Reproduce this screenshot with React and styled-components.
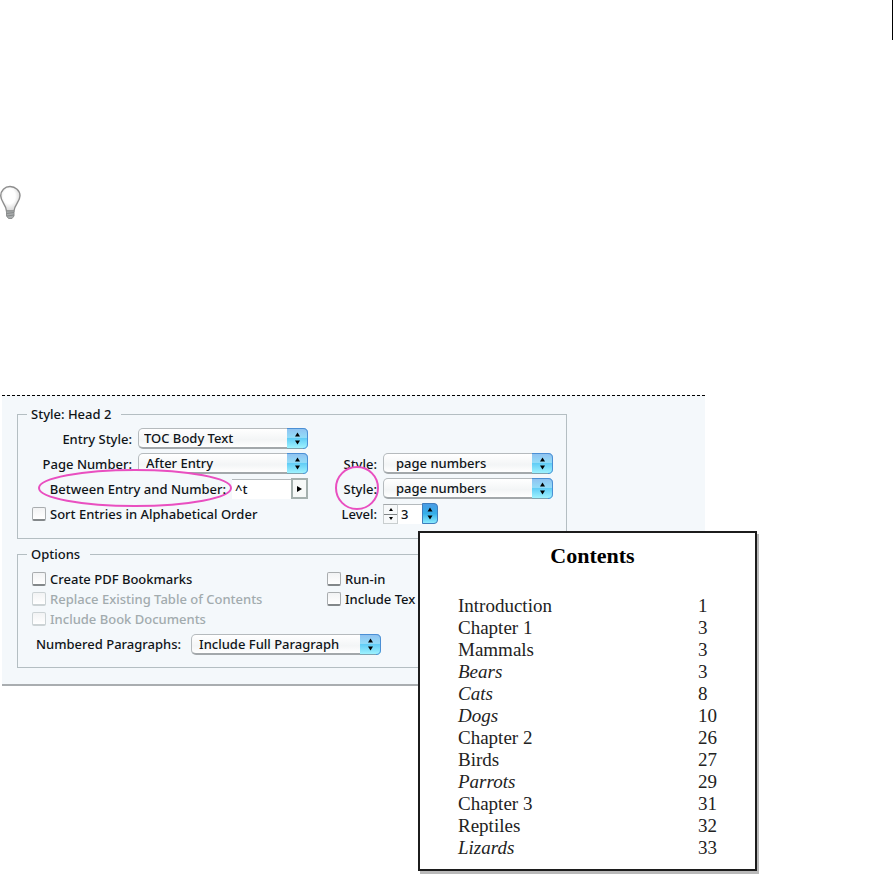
import React from "react";
import styled, { createGlobalStyle } from "styled-components";

const GlobalStyle = createGlobalStyle`
  * {
    box-sizing: border-box;
  }
  body {
    margin: 0;
    background: #ffffff;
    color: #101418;
    font-family: "Noto Sans", "Open Sans", sans-serif;
    font-size: 13px;
    font-weight: 500;
  }
  input,
  select,
  button {
    margin: 0;
    font: inherit;
    color: inherit;
  }
`;

const Page = styled.div`
  display: flex;
  flex-direction: column;
`;

const PageHeader = styled.header`
  height: 40px;
  border-right: 1px solid #000000;
`;

const Tip = styled.div`
  height: 210px;
  margin-top: 145px;
`;

const Figure = styled.figure`
  display: grid;
  margin: 0;
  padding-left: 2px;
`;

const Panel = styled.form`
  grid-area: 1 / 1;
  align-self: start;
  width: 100%;
  max-width: 703px;
  padding: 8px 15px 16px;
  border-top: 1px dashed #000000;
  border-bottom: 2px solid #a9adb0;
  background: #f4f8fb;
`;

const Group = styled.fieldset`
  max-width: 550px;
  margin: 0 0 5px;
  padding: ${(props) => props.$padding};
  border: 1px solid #b4bec2;
  &:last-child {
    margin-bottom: 0;
  }
`;

const GroupTitle = styled.legend`
  margin-left: 9px;
  padding: 0 10px 0 4px;
  line-height: 20px;
`;

const StyleGrid = styled.div`
  display: grid;
  grid-template-columns: 290px 1fr;
  grid-auto-rows: 25px;
`;

const Field = styled.div`
  display: flex;
  grid-column: 1;
  align-items: center;
  justify-content: flex-end;
  gap: 6px;
`;

const SideField = styled(Field)`
  grid-column: 2;
  justify-content: flex-start;
`;

const Label = styled.label`
  line-height: 20px;
  white-space: nowrap;
`;

const SideLabel = styled(Label)`
  width: 69px;
  text-align: right;
`;

const Ringed = styled.span`
  position: relative;
  z-index: 1;
`;

const Ring = styled.svg`
  position: absolute;
  z-index: -1;
  top: 50%;
  left: 50%;
  transform: translate(-50%, -50%);
`;

const SelectBox = styled.div`
  position: relative;
  width: ${(props) => props.$width};
  height: 21px;
`;

const SelectInput = styled.select`
  appearance: none;
  display: block;
  width: 100%;
  height: 21px;
  padding: 0 0 0 ${(props) => props.$indent};
  border: 1px solid #b5babd;
  border-bottom: 2px solid #a3a8ab;
  border-radius: 5px;
  background: linear-gradient(#ffffff 0%, #f3f5f6 60%, #ffffff 100%);
  line-height: 18px;
`;

const Cap = styled.svg`
  position: absolute;
  top: 0;
  right: 0;
  pointer-events: none;
`;

const TextInput = styled.input`
  width: ${(props) => props.$width};
  height: 20px;
  padding: 0 3px;
  border: 0;
  border-top: 1px solid #b5babd;
  background: #ffffff;
`;

const Joined = styled.div`
  display: flex;
  align-items: center;
`;

const MenuButton = styled.button`
  display: flex;
  align-items: center;
  justify-content: center;
  width: 17px;
  height: 21px;
  padding: 0;
  border: 2px solid #a5b0ae;
  background: #f7f9f8;
`;

const Stepper = styled.div`
  display: flex;
  flex-direction: column;
  border: 1px solid #c9cecf;
  border-top-color: #a3a8ab;
`;

const StepButton = styled.button`
  display: flex;
  align-items: center;
  justify-content: center;
  width: 13px;
  height: 9px;
  padding: 0;
  border: 0;
  background: #f7f9fa;
  & + & {
    border-top: 1px solid #7f8486;
  }
`;

const CheckLabel = styled.label`
  display: flex;
  align-items: center;
  gap: 4px;
  padding-left: 14px;
  line-height: 20px;
  white-space: nowrap;
  color: ${(props) => (props.$muted ? "#a2abae" : "inherit")};
`;

const CheckInput = styled.input`
  appearance: none;
  width: 14px;
  height: 14px;
  border: 1px solid #a9adaf;
  border-bottom: 2px solid #83888a;
  border-radius: 2px;
  background: linear-gradient(#f2f3f4, #ffffff);
  &:checked {
    background: #43aee4;
  }
  &:disabled {
    border-color: #ccd3d5;
  }
`;

const OptionGrid = styled.div`
  display: grid;
  grid-template-columns: 295px 1fr;
  grid-template-rows: repeat(3, 20px);
  grid-auto-flow: column;
`;

const NumberedField = styled(Field)`
  height: 30px;
  justify-content: flex-start;
  gap: 10px;
  padding-left: 18px;
`;

const Card = styled.section`
  grid-area: 1 / 1;
  z-index: 2;
  justify-self: start;
  width: 339px;
  margin: 136px 0 3px 416px;
  padding: 8px 38px 10px;
  border: 2px solid #1c1c1c;
  background: #ffffff;
  box-shadow: 2px 3px 0 #b9b9b9;
  color: #222222;
  font-family: "Liberation Serif", serif;
  font-weight: 400;
`;

const CardTitle = styled.h2`
  margin: 0 0 24px;
  padding-left: 10px;
  color: #000000;
  font-size: 22px;
  line-height: 30px;
  text-align: center;
`;

const ContentsTable = styled.table`
  width: 100%;
  border-collapse: collapse;
  font-size: 19px;
  line-height: 22px;
`;

const EntryCell = styled.td`
  height: 22px;
  padding: 0;
  font-style: ${(props) => (props.$italic ? "italic" : "normal")};
`;

const PageCell = styled.td`
  width: 18px;
  padding: 0;
`;

const entries = [
  { title: "Introduction", page: 1 },
  { title: "Chapter 1", page: 3 },
  { title: "Mammals", page: 3 },
  { title: "Bears", page: 3, italic: true },
  { title: "Cats", page: 8, italic: true },
  { title: "Dogs", page: 10, italic: true },
  { title: "Chapter 2", page: 26 },
  { title: "Birds", page: 27 },
  { title: "Parrots", page: 29, italic: true },
  { title: "Chapter 3", page: 31 },
  { title: "Reptiles", page: 32 },
  { title: "Lizards", page: 33, italic: true },
];

const BulbIcon = () => (
  <svg width="22" height="35" viewBox="0 0 22 35" aria-hidden="true">
    <defs>
      <radialGradient id="glass" cx="0.45" cy="0.4" r="0.6">
        <stop offset="0.5" stopColor="#ffffff" />
        <stop offset="1" stopColor="#d4d4d4" />
      </radialGradient>
    </defs>
    <path
      d="M10 1.5C4.8 1.5 0.7 5.6 0.7 10.8C0.7 16.5 6 19.5 6.5 26H14C14.5 19.5 20 16.5 20 10.8C20 5.6 15.5 1.5 10 1.5Z"
      fill="url(#glass)"
      stroke="#8d8d8d"
      strokeWidth="1.4"
    />
    <path
      d="M6.5 26H14V31L12 33.5H8.5L6.5 31Z"
      fill="#a9acad"
      stroke="#8f9292"
    />
    <path d="M6.5 28.5L14 27.5M7 31L14 30" stroke="#858888" />
  </svg>
);

const Select = ({ id, value, width, indent = "5px" }) => (
  <SelectBox $width={width}>
    <SelectInput id={id} $indent={indent}>
      <option>{value}</option>
    </SelectInput>
    <Cap width="21" height="21" viewBox="0 0 21 21" aria-hidden="true">
      <defs>
        <linearGradient id={`${id}-cap`} x1="0" y1="0" x2="0" y2="1">
          <stop offset="0" stopColor="#8fc0f0" />
          <stop offset="0.45" stopColor="#93dcf8" />
          <stop offset="0.5" stopColor="#62cdf6" />
          <stop offset="1" stopColor="#a4f6ff" />
        </linearGradient>
      </defs>
      <path d="M0 0H16Q21 0 21 5V16Q21 21 16 21H0Z" fill={`url(#${id}-cap)`} />
      <path
        d="M0 0.5H16Q20.5 0.5 20.5 5V16Q20.5 20.5 16 20.5"
        fill="none"
        stroke="#4b8fd4"
      />
      <path d="M0 20.5H16" stroke="#7fa3b0" />
      <path d="M8 8.5L10.5 4.5L13 8.5ZM8 12.5L10.5 16.5L13 12.5Z" />
    </Cap>
  </SelectBox>
);

const LevelSelect = () => (
  <SelectBox $width="16px">
    <SelectInput id="level-menu" $indent="0" aria-label="Level list" />
    <Cap width="16" height="21" viewBox="0 0 16 21" aria-hidden="true">
      <defs>
        <linearGradient id="level-cap" x1="0" y1="0" x2="0" y2="1">
          <stop offset="0" stopColor="#4b9be4" />
          <stop offset="0.5" stopColor="#35aee9" />
          <stop offset="1" stopColor="#8eeeff" />
        </linearGradient>
      </defs>
      <path
        d="M0.5 0.5H12Q15.500 0.5 15.5 4V17Q15.5 20.5 12 20.5H0.5Z"
        fill="url(#level-cap)"
        stroke="#3f7dbd"
      />
      <path d="M5.5 8.5L8 4.5L10.5 8.5ZM5.5 12.5L8 16.5L10.5 12.5Z" />
    </Cap>
  </SelectBox>
);

const Check = ({ label, disabled }) => (
  <CheckLabel $muted={disabled}>
    <CheckInput type="checkbox" disabled={disabled} />
    {label}
  </CheckLabel>
);

const StyleGroup = () => (
  <Group $padding="2px 0 12px">
    <GroupTitle>Style: Head 2</GroupTitle>
    <StyleGrid>
      <Field>
        <Label htmlFor="entry-style">Entry Style:</Label>
        <Select id="entry-style" value="TOC Body Text" width="170px" />
      </Field>
      <Field>
        <Label htmlFor="page-number">Page Number:</Label>
        <Select
          id="page-number"
          value="After Entry"
          width="170px"
          indent="7px"
        />
      </Field>
      <SideField>
        <SideLabel htmlFor="number-style">Style:</SideLabel>
        <Select
          id="number-style"
          value="page numbers"
          width="170px"
          indent="12px"
        />
      </SideField>
      <Field>
        <Label htmlFor="between">
          <Ringed>
            <Ring width="202" height="42" aria-hidden="true">
              <ellipse
                cx="98"
                cy="20"
                rx="96"
                ry="18"
                fill="#f4f8fb"
                stroke="#e94fc0"
                strokeWidth="2"
              />
            </Ring>
            Between Entry and Number:
          </Ringed>
        </Label>
        <Joined>
          <TextInput id="between" $width="59px" defaultValue="^t" />
          <MenuButton type="button" aria-label="Insert special character">
            <svg width="5" height="6" aria-hidden="true">
              <path d="M0 0L5 3L0 6Z" />
            </svg>
          </MenuButton>
        </Joined>
      </Field>
      <SideField>
        <SideLabel htmlFor="between-style">
          <Ringed>
            <Ring width="52" height="48" aria-hidden="true">
              <circle
                cx="23"
                cy="23"
                r="21"
                fill="#f4f8fb"
                stroke="#e94fc0"
                strokeWidth="2"
              />
            </Ring>
            Style:
          </Ringed>
        </SideLabel>
        <Select
          id="between-style"
          value="page numbers"
          width="170px"
          indent="12px"
        />
      </SideField>
      <Check label="Sort Entries in Alphabetical Order" />
      <SideField>
        <SideLabel htmlFor="level">Level:</SideLabel>
        <Joined>
          <Stepper>
            <StepButton type="button" aria-label="Raise level">
              <svg width="4" height="3" aria-hidden="true">
                <path d="M0 3L2 0L4 3Z" />
              </svg>
            </StepButton>
            <StepButton type="button" aria-label="Lower level">
              <svg width="4" height="3" aria-hidden="true">
                <path d="M0 0L2 3L4 0Z" />
              </svg>
            </StepButton>
          </Stepper>
          <TextInput id="level" $width="24px" defaultValue="3" />
          <LevelSelect />
        </Joined>
      </SideField>
    </StyleGrid>
  </Group>
);

const OptionsGroup = () => (
  <Group $padding="5px 0 8px">
    <GroupTitle>Options</GroupTitle>
    <OptionGrid>
      <Check label="Create PDF Bookmarks" />
      <Check label="Replace Existing Table of Contents" disabled />
      <Check label="Include Book Documents" disabled />
      <Check label="Run-in" />
      <Check label="Include Tex" />
    </OptionGrid>
    <NumberedField>
      <Label htmlFor="numbered">Numbered Paragraphs:</Label>
      <Select
        id="numbered"
        value="Include Full Paragraph"
        width="190px"
        indent="7px"
      />
    </NumberedField>
  </Group>
);

const ContentsCard = () => (
  <Card>
    <CardTitle>Contents</CardTitle>
    <ContentsTable>
      <tbody>
        {entries.map((entry) => (
          <tr key={entry.title}>
            <EntryCell $italic={entry.italic}>{entry.title}</EntryCell>
            <PageCell>{entry.page}</PageCell>
          </tr>
        ))}
      </tbody>
    </ContentsTable>
  </Card>
);

const App = () => {
  return (
    <Page>
      <GlobalStyle />
      <PageHeader />
      <Tip>
        <BulbIcon />
      </Tip>
      <Figure>
        <Panel>
          <StyleGroup />
          <OptionsGroup />
        </Panel>
        <ContentsCard />
      </Figure>
    </Page>
  );
};

export default App;
